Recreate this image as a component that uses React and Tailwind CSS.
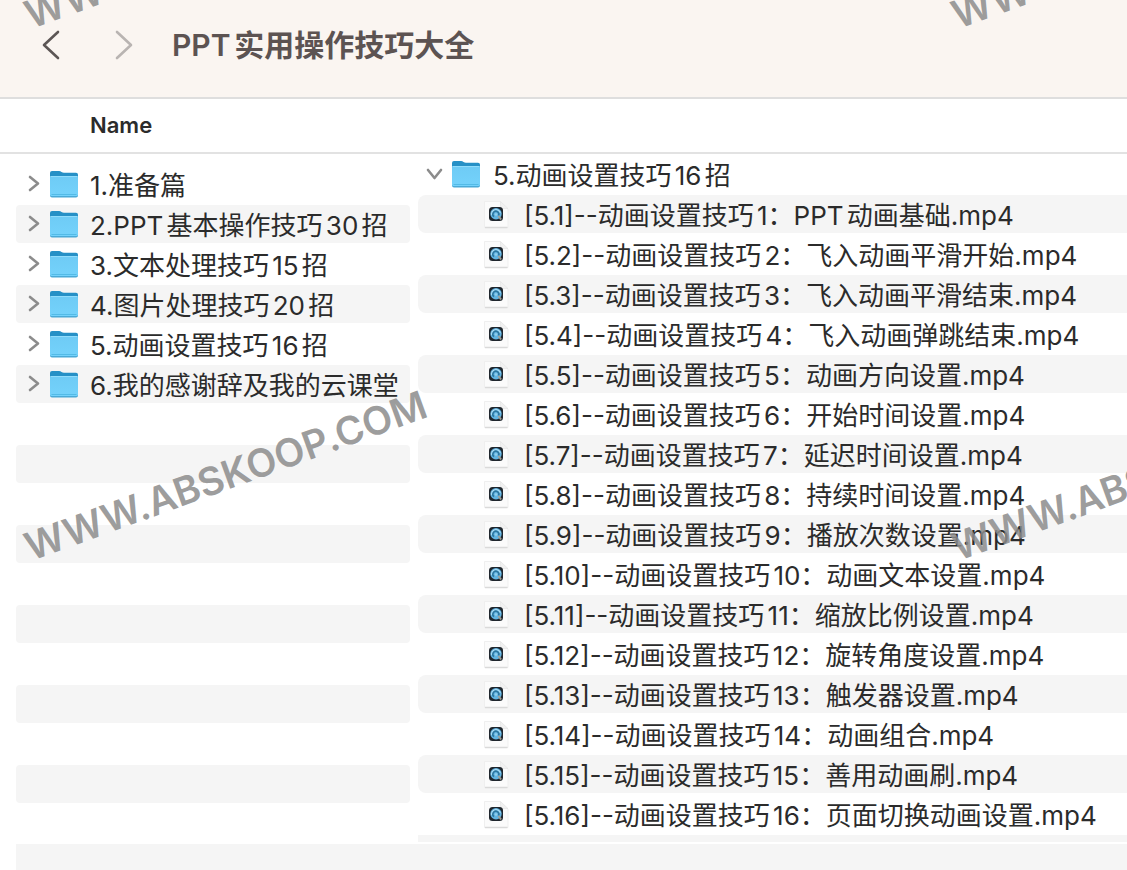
const folders = [
  "1.准备篇",
  "2.PPT基本操作技巧30招",
  "3.文本处理技巧15招",
  "4.图片处理技巧20招",
  "5.动画设置技巧16招",
  "6.我的感谢辞及我的云课堂",
];

const videos = [
  "PPT动画基础",
  "飞入动画平滑开始",
  "飞入动画平滑结束",
  "飞入动画弹跳结束",
  "动画方向设置",
  "开始时间设置",
  "延迟时间设置",
  "持续时间设置",
  "播放次数设置",
  "动画文本设置",
  "缩放比例设置",
  "旋转角度设置",
  "触发器设置",
  "动画组合",
  "善用动画刷",
  "页面切换动画设置",
];

const emptyRows = Array.from({ length: 11 }, (_, i) => i + folders.length);

function Chevron({ points }) {
  return (
    <svg viewBox="0 0 24 32" className="h-8 w-6" fill="none" aria-hidden="true">
      <polyline
        points={points}
        stroke="currentColor"
        strokeWidth="2.6"
        strokeLinecap="round"
        strokeLinejoin="round"
      />
    </svg>
  );
}

function DisclosureIcon({ open }) {
  return (
    <svg
      viewBox="0 0 20 20"
      className={open ? "h-5 w-5 rotate-90" : "h-5 w-5"}
      fill="none"
      aria-hidden="true"
    >
      <path
        d="M6 3 L14 9.5 L6 16"
        stroke="#8c8c8c"
        strokeWidth="2.6"
        strokeLinecap="round"
        strokeLinejoin="round"
      />
    </svg>
  );
}

function FolderIcon() {
  return (
    <svg viewBox="0 0 30 28" className="h-7 w-[30px] shrink-0" aria-hidden="true">
      <defs>
        <linearGradient id="folderFront" x1="0" y1="0" x2="0" y2="1">
          <stop offset="0" stopColor="#6ecbf5" />
          <stop offset="1" stopColor="#74d2fb" />
        </linearGradient>
      </defs>
      <path
        d="M1 3 Q1 1 3 1 H10 Q11.5 1 12.5 2 Q13.5 2.8 15 2.8 H27 Q29 2.8 29 4.8 V14 H1 Z"
        fill="#2690c6"
      />
      <rect x="1" y="6" width="28" height="21.5" rx="2" fill="#4aa9d6" />
      <rect x="1" y="6" width="28" height="20" rx="1.5" fill="url(#folderFront)" />
      <path d="M1.5 6.5 H28.5" stroke="#91dcfb" strokeWidth="1" />
      <path d="M2.5 24.500 H27.500" stroke="#53bae6" strokeWidth="1" />
    </svg>
  );
}

function VideoIcon() {
  return (
    <svg viewBox="0 0 28 32" className="h-8 w-7 shrink-0" aria-hidden="true">
      <path d="M2.5 3.5 H18 L26 11 V29.5 H2.5 Z" fill="#fbfbfb" stroke="#efefef" />
      <path d="M18.500 3.500 V10.500 H26 Z" fill="#f1f1f1" stroke="#e2e2e2" strokeWidth="0.6" />
      <path d="M3 29.5 H25.5" stroke="#dadada" strokeWidth="1.5" />
      <rect x="7" y="9" width="14" height="14" rx="3.5" fill="#1f262d" />
      <circle cx="14" cy="15.8" r="5.7" fill="#62b4e2" />
      <path d="M9.800 17 A4.300 4.300 0 0 1 18.200 15" fill="none" stroke="#b2def4" strokeWidth="1.3" />
      <path
        d="M12 18.600 A3 3 0 1 1 16.600 17.500"
        fill="none"
        stroke="#2c769f"
        strokeWidth="1.5"
      />
      <circle cx="14" cy="16.500" r="1.300" fill="#92cfed" />
      <path d="M16.500 18 L19 21.500" stroke="#a3a097" strokeWidth="2" />
    </svg>
  );
}

function Stripe({ index, rounded, children }) {
  const striped = index % 2 === 1;
  return (
    <li className="h-10 py-px">
      <div
        className={`flex h-full items-center ${striped ? "bg-[#f5f5f5]" : ""} ${
          rounded ? "rounded-l-lg" : "rounded-sm"
        }`}
      >
        {children}
      </div>
    </li>
  );
}

function Watermark({ className }) {
  return (
    <div
      className={`pointer-events-none absolute origin-bottom-left -rotate-20 text-[39px] leading-10 font-semibold whitespace-nowrap text-[#8c8c8c]/85 select-none ${className}`}
      aria-hidden="true"
    >
      WWW.ABSKOOP.COM
    </div>
  );
}

export default function App() {
  return (
    <div className="relative min-h-screen overflow-hidden bg-white font-['Inter','Noto_Sans_CJK_SC',sans-serif] text-[#2b2b2b] [text-autospace:normal]">
      <header className="flex h-[99px] items-start border-b-2 border-[#dedede] bg-[#faf5f1] pt-7 pl-10">
        <button type="button" aria-label="Back" className="mr-12 text-[#5c5655]">
          <Chevron points="18,4 4,17 18,30" />
        </button>
        <button type="button" aria-label="Forward" className="mr-9 text-[#b9b4b2]">
          <Chevron points="5,4 19,17 5,30" />
        </button>
        <h1 className="text-[30px] leading-[34px] font-semibold whitespace-nowrap text-[#5c5352]">
          PPT实用操作技巧大全
        </h1>
      </header>

      <div className="h-[55px] border-b-2 border-[#e2e2e2] pt-3 pl-[90px] text-[22px] leading-7 font-semibold">
        Name
      </div>

      <main className="grid grid-cols-[5fr_9fr] gap-2 pl-4">
        <ul className="pt-[10px] text-[26px] leading-9 whitespace-nowrap">
          {folders.map((name, i) => (
            <Stripe key={name} index={i}>
              <button type="button" aria-label={`Expand ${name}`} className="mr-[5px] ml-2">
                <DisclosureIcon />
              </button>
              <FolderIcon />
              <span className="pt-[3px] pl-[11px]">{name}</span>
            </Stripe>
          ))}
          {emptyRows.map((i) => (
            <Stripe key={i} index={i} />
          ))}
        </ul>

        <ul className="overflow-hidden text-[26px] leading-9 whitespace-nowrap">
          <Stripe index={0} rounded>
            <button type="button" aria-label="Collapse 5.动画设置技巧16招" className="mr-[7px] ml-[6px]">
              <DisclosureIcon open />
            </button>
            <FolderIcon />
            <span className="pt-[3px] pl-3">5.动画设置技巧16招</span>
          </Stripe>
          {videos.map((title, i) => (
            <Stripe key={title} index={i + 1} rounded>
              <span className="mr-[14px] ml-16">
                <VideoIcon />
              </span>
              <span className="pt-[3px]">{`[5.${i + 1}]--动画设置技巧${i + 1}：${title}.mp4`}</span>
            </Stripe>
          ))}
          <li className="mt-px h-[7px] bg-[#f5f5f5]" />
        </ul>
      </main>
      <div className="ml-4 h-[26px] bg-[#f5f5f5]" />

      <Watermark className="-top-[5px] left-[33px]" />
      <Watermark className="-top-[5px] left-[960px]" />
      <Watermark className="top-[527px] left-[33px]" />
      <Watermark className="top-[527px] left-[960px]" />
    </div>
  );
}
